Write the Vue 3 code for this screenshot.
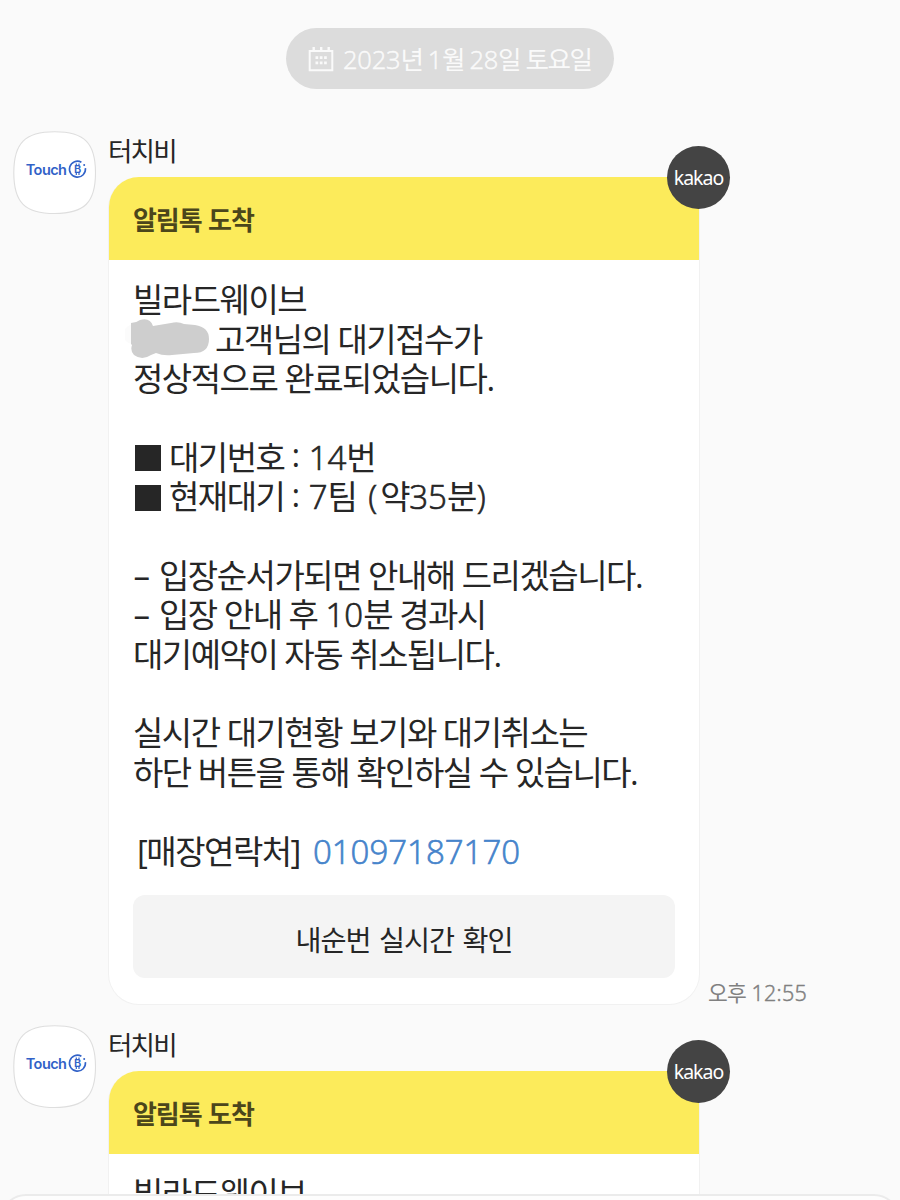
<template>
  <div class="chat">
    <div class="date-row">
      <div class="date-pill">
        <svg class="calendar" width="26" height="26" viewBox="0 0 26 26" fill="none">
          <path d="M1.7 5H24.3V24.2H1.7Z" stroke="#fafafa" stroke-width="2" />
          <path d="M5.7 1V5M13.2 1V5M20.7 1V5" stroke="#fafafa" stroke-width="2.4" />
          <path d="M7.5 11.6H19M7.5 16.9H19" stroke="#fafafa" stroke-width="2.6" stroke-dasharray="2.7 1.6" />
        </svg>
        <span class="date-text"><span class="num">2023</span>년 <span class="num">1</span>월 <span class="num">28</span>일 토요일</span>
      </div>
    </div>

    <section v-for="message in messages" :key="message.id" class="message">
      <svg class="avatar" width="84" height="84" viewBox="0 0 84 84">
        <path d="M41.7 .8C71.5 .8 82.5 12 82.5 41.7S71.5 82.5 41.7 82.5 .8 71.5 .8 41.7 12 .8 41.7 .8Z" fill="#fff" stroke="#dedede" stroke-width="1.1" />
        <text x="12.7" y="43.6" class="brand" textLength="41.3">Touch</text>
        <path d="M68.4 31.2A8 8 0 1 0 72.4 37.2" fill="none" stroke="#3262c8" stroke-width="1.6" />
        <circle cx="71.2" cy="34" r="1" fill="#3262c8" />
        <text x="64.6" y="42.3" class="coin" text-anchor="middle">B</text>
        <path d="M63.3 32.4V34.6M66 32.4V34.6M63.3 41.8V44M66 41.8V44" stroke="#3262c8" stroke-width="1.2" />
      </svg>

      <div class="content">
        <div class="sender">터치비</div>
        <div class="bubble-row">
          <article class="bubble">
            <header class="bubble-head">알림톡 도착</header>
            <div class="badge">kakao</div>
            <div class="bubble-body">
              <p v-for="(line, i) in message.lines" :key="i" class="line" :class="{ contact: line.contact }">
                <svg v-if="line.masked" class="mask" width="84" height="40" viewBox="0 0 84 40">
                  <path d="M8 5C-5 8-5 24 8 25Z" fill="#fbfbfb" />
                  <path d="M6 4Q11 4 15 1Q25-2 28 7L46 4Q53 2 59 5L70 6Q84 8 84 20Q84 34 69 34L47 36Q38 37 31 34L26 36Q17 42 9 36Q5 32 7 26L6 25Z" fill="#cecece" />
                </svg>
                <span v-for="(part, j) in line.parts" :key="j" :class="part[1]">{{ part[0] }}</span>
              </p>
              <button v-if="message.action" class="action">{{ message.action }}</button>
            </div>
          </article>
          <time v-if="message.time" class="time">오후 <span class="num">{{ message.time }}</span></time>
        </div>
      </div>
    </section>

    <div class="input-sheet"></div>
  </div>
</template>

<script setup>
const lines = [
  { parts: [['빌라드웨이브']] },
  { masked: true, parts: [['고객님의 대기접수가']] },
  { parts: [['정상적으로 완료되었습니다.']] },
  { parts: [] },
  { parts: [['', 'square'], ['대기번호'], [':', 'colon'], ['14', 'num'], ['번']] },
  { parts: [['', 'square'], ['현재대기'], [':', 'colon'], ['7', 'num'], ['팀'], ['(', 'paren'], ['약'], ['35', 'num'], ['분'], [')', 'close']] },
  { parts: [] },
  { parts: [['–', 'dash'], ['입장순서가되면 안내해 드리겠습니다.']] },
  { parts: [['–', 'dash'], ['입장 안내 후 '], ['10', 'num ten'], ['분 경과시']] },
  { parts: [['대기예약이 자동 취소됩니다.']] },
  { parts: [] },
  { parts: [['실시간 대기현황 보기와 대기취소는']] },
  { parts: [['하단 버튼을 통해 확인하실 수 있습니다.']] },
  { parts: [] },
  { contact: true, parts: [['[매장연락처]'], ['01097187170', 'num phone']] }
]

const messages = [
  { id: 1, lines, action: '내순번 실시간 확인', time: '12:55' },
  { id: 2, lines: lines.slice(0, 1) }
]
</script>

<style>
body {
  margin: 0;
  background: #fafafa;
}
</style>

<style scoped>
.chat {
  position: relative;
  height: 1200px;
  overflow: hidden;
  box-sizing: border-box;
  padding-top: 28px;
  background: #fafafa;
  color: #262626;
  font-family: "Open Sans", "Noto Sans CJK KR", sans-serif;
}

.date-row {
  display: flex;
  justify-content: center;
  height: 61px;
  margin-bottom: 42px;
}

.date-pill {
  display: flex;
  align-items: center;
  box-sizing: border-box;
  width: 328px;
  padding-left: 22px;
  border-radius: 31px;
  background: #dcdcdc;
  color: #fafafa;
}

.calendar {
  margin-right: 9px;
}

.date-text {
  font-size: 25.5px;
  line-height: 60px;
  letter-spacing: -1.4px;
  white-space: nowrap;
}

.num,
.paren,
.close {
  font-weight: 300;
  letter-spacing: 0;
  -webkit-text-stroke: 0.7px currentColor;
}

.date-text .num {
  letter-spacing: -0.2px;
}

.message {
  display: flex;
  height: 894px;
}

.avatar {
  flex: none;
  margin-left: 13px;
}

.brand {
  fill: #3262c8;
  font-family: Inter, sans-serif;
  font-size: 14.5px;
  font-weight: 600;
}

.coin {
  fill: #3262c8;
  font-family: Inter, sans-serif;
  font-size: 11px;
  font-weight: 600;
}

.content {
  margin-left: 11px;
}

.sender {
  height: 46px;
  line-height: 41px;
  font-size: 26.5px;
  letter-spacing: -1.8px;
}

.bubble-row {
  display: flex;
  align-items: flex-end;
}

.bubble {
  position: relative;
  box-sizing: border-box;
  width: 592px;
  height: 828px;
  border: 1px solid #f1f1f1;
  border-top: 0;
  border-radius: 31px 0 31px 31px;
  background: #fff;
}

.bubble-head {
  height: 83px;
  padding-left: 24px;
  border-radius: 30px 0 0 0;
  background: #fceb5b;
  color: #4b461b;
  font-size: 26px;
  font-weight: 700;
  line-height: 87px;
  letter-spacing: -1.1px;
  word-spacing: 1px;
}

.badge {
  position: absolute;
  top: -31px;
  right: -31px;
  width: 63px;
  height: 63px;
  border-radius: 50%;
  background: #444;
  color: #fff;
  font-family: "Noto Sans", sans-serif;
  font-size: 19.5px;
  line-height: 63px;
  letter-spacing: -1px;
  text-align: center;
}

.bubble-body {
  padding: 20.2px 24px 0;
}

.line {
  display: flex;
  align-items: center;
  height: 39.4px;
  margin: 0;
  font-size: 33px;
  line-height: 39.4px;
  letter-spacing: -1.5px;
  white-space: pre;
}

.mask {
  flex: none;
  margin-left: -8px;
  margin-right: 6px;
}

.square {
  width: 26px;
  height: 26px;
  margin: 2px 8px 0 2px;
  background: #262626;
}

.dash {
  width: 25.5px;
  margin-left: 0.5px;
}

.colon {
  margin: 0 10px 0 7px;
  padding-bottom: 5px;
}

.paren {
  margin-left: 12px;
  margin-right: 3px;
}

.close {
  margin-left: 1px;
}

.ten {
  margin-left: 1px;
}

.contact {
  padding-left: 4px;
}

.phone {
  margin-left: 13px;
  color: #4684cb;
}

.action {
  display: block;
  width: 542px;
  height: 83px;
  margin-top: 23.8px;
  padding: 4px 0 0;
  border: 0;
  border-radius: 12px;
  background: #f4f4f4;
  color: #262626;
  font-family: inherit;
  font-size: 28.3px;
  letter-spacing: -1px;
  word-spacing: 2px;
}

.time {
  margin-left: 8px;
  color: #808080;
  font-size: 21.5px;
  line-height: 24px;
  letter-spacing: -0.9px;
  word-spacing: 1px;
  white-space: nowrap;
}

.date-text .num,
.time .num {
  -webkit-text-stroke-width: 0.5px;
}

.time .num {
  letter-spacing: 0.3px;
}

.input-sheet {
  position: absolute;
  top: 1194px;
  left: 0;
  box-sizing: border-box;
  width: 900px;
  height: 60px;
  border: 2px solid #ebebeb;
  border-radius: 26px;
  background: #fdfdfd;
}
</style>
